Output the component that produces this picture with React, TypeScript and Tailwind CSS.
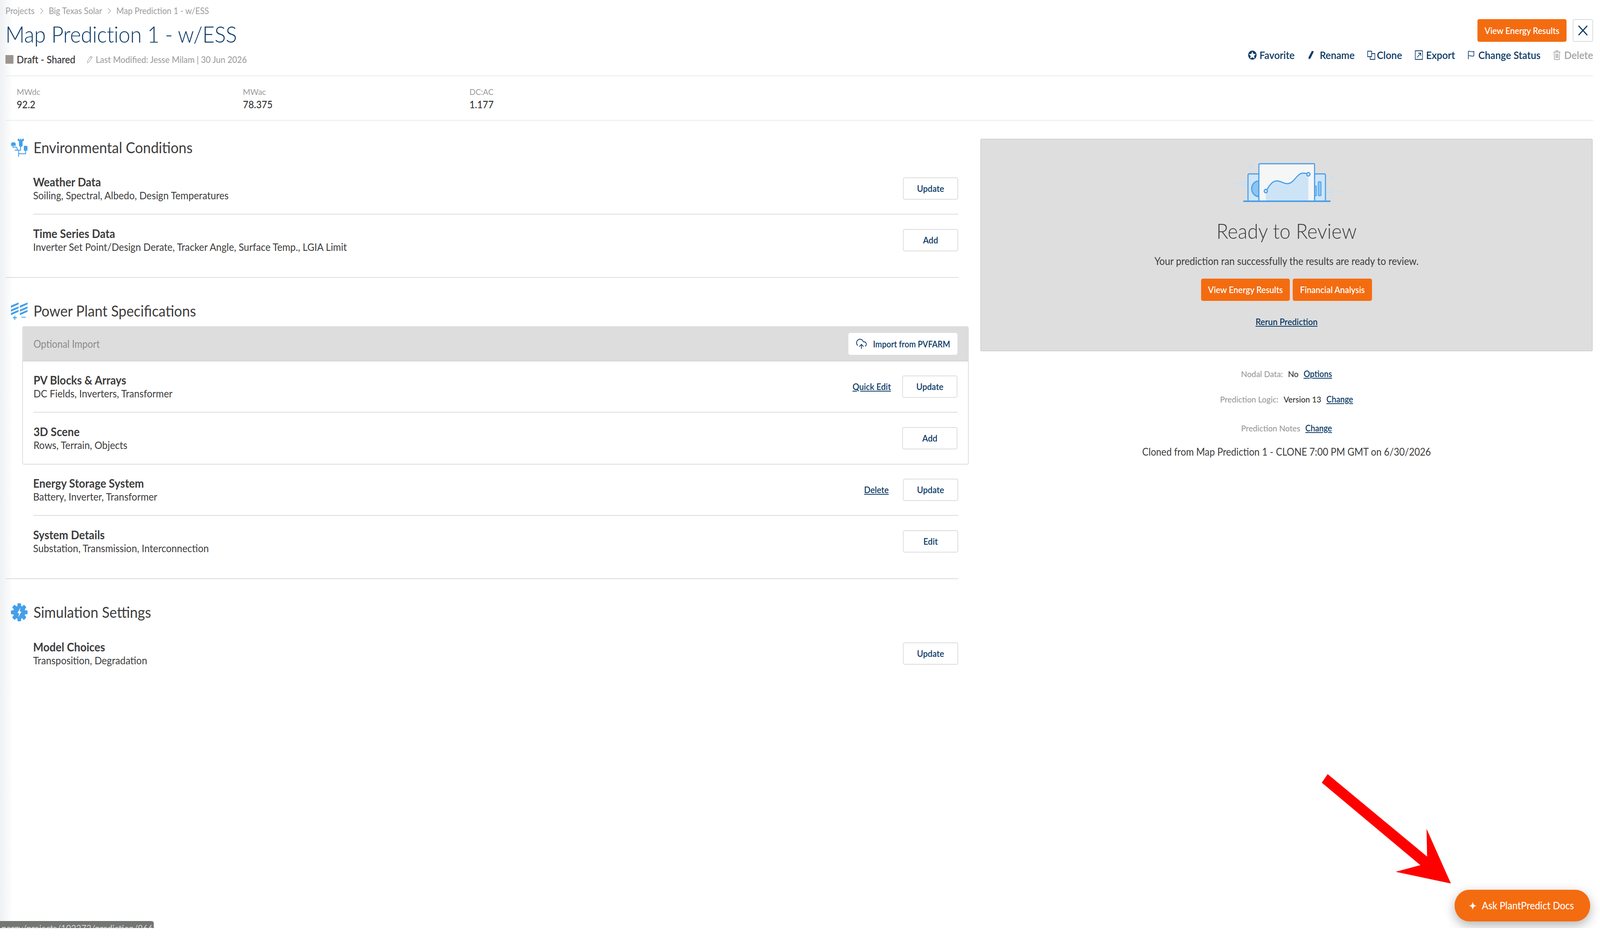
import type { FC, ReactNode } from 'react';
import { CloudUpload } from 'lucide-react';

// the page is laid out on the 4400px reference; the window can be narrower
const DESIGN_WIDTH = 4400;

const Caret: FC = () => (
  <svg viewBox="0 0 10 18" className="mx-[15px] h-[16px] w-[9px]" fill="none" stroke="#9c9c9c" strokeWidth="1.5">
    <path d="M1 1l8 8-8 8" />
  </svg>
);

const EnvIcon: FC = () => (
  <svg viewBox="30 30 135 138" className="h-[46px] w-[46px] shrink-0" fill="#459fe9">
    <path d="M85 30h13v8h7v-8h10v8h7v-8h13v18h-10v37l-12 8h-6l-12-8V48H85z" />
    <path d="M30 66l8-8h22l8 8v19H30z" />
    <path d="M135 85h30v37h-30z" />
    <g fill="none" stroke="#459fe9" strokeWidth="7">
      <path d="M108 85v33H60" />
      <path d="M45 85v10h22q13 0 13 12v11" />
      <path d="M92 118v50" />
      <path d="M150 122v23H92" />
    </g>
  </svg>
);

const PowerIcon: FC = () => (
  <svg viewBox="30 35 135 135" className="h-[46px] w-[46px] shrink-0" fill="#459fe9">
    <path d="M30 62l62-24v14l-62 26zM30 92l62-24v14l-62 26zM30 118l62-24v14l-62 26z" />
    <path d="M102 62l63-24v14l-63 26zM102 92l63-24v14l-63 26zM102 118l63-24v14l-63 26z" />
    <path d="M58 137h7v12h13v7H65v13h-7v-13H45v-7h13zM114 146h36v6h-36z" />
  </svg>
);

const GearIcon: FC = () => (
  <svg viewBox="0 0 46 46" className="h-[46px] w-[46px] shrink-0">
    <g fill="#459fe9">
      <circle cx="23" cy="23" r="17" />
      <rect x="18" y="0" width="10" height="46" rx="2" />
      <rect x="18" y="0" width="10" height="46" rx="2" transform="rotate(45 23 23)" />
      <rect x="18" y="0" width="10" height="46" rx="2" transform="rotate(90 23 23)" />
      <rect x="18" y="0" width="10" height="46" rx="2" transform="rotate(135 23 23)" />
    </g>
    <path d="M26 11l-8 14h5l-3 11 9-15h-5z" fill="#ffffff" />
  </svg>
);

const StarCircle: FC = () => (
  <svg viewBox="0 0 24 24" className="h-[24px] w-[24px]">
    <circle cx="12" cy="12" r="11.5" fill="#0b3a66" />
    <path d="M12 2.5l2.9 6.3 6.8.8-5 4.6 1.4 6.8-6.100-3.400-6.100 3.400 1.400-6.800-5-4.600 6.800-.8z" fill="#ffffff" />
  </svg>
);

const PencilSolid: FC = () => (
  <svg viewBox="0 0 20 24" className="h-[24px] w-[20px]" fill="#0b3a66">
    <path d="M13 1l5 2-9 17-5 3-.5-5.500z" />
  </svg>
);

const CloneIcon: FC = () => (
  <svg viewBox="0 0 22 24" className="h-[24px] w-[22px]" fill="none" stroke="#0b3a66" strokeWidth="1.800">
    <path d="M1 2h11v14H1z" />
    <path d="M12 8h9v15H8v-7" />
  </svg>
);

const ExportIcon: FC = () => (
  <svg viewBox="0 0 22 24" className="h-[24px] w-[22px]" fill="none" stroke="#0b3a66" strokeWidth="1.800">
    <path d="M1 1h20v22H1z" />
    <path d="M6 18l9-10M9 7h7v7" />
  </svg>
);

const FlagIcon: FC = () => (
  <svg viewBox="0 0 20 24" className="h-[24px] w-[19px]" fill="none" stroke="#0b3a66" strokeWidth="1.800">
    <path d="M2 23V2c5-2 10 3 16 0v12c-5 3-11-2-16 0" />
  </svg>
);

const TrashIcon: FC = () => (
  <svg viewBox="0 0 22 26" className="h-[26px] w-[21px]" fill="none" stroke="#a3a3a3" strokeWidth="1.800">
    <path d="M1 5h20M8 5V1h6v4M3 5l1 20h14l1-20M8 9v12M11 9v12M14 9v12" />
  </svg>
);

const PencilOutline: FC = () => (
  <svg viewBox="0 0 20 24" className="h-[20px] w-[18px]" fill="none" stroke="#a3a3a3" strokeWidth="1.500">
    <path d="M13 2l5 3-11 15-5 3 .5-6zM11 5l5 3" />
  </svg>
);

const ReviewArt: FC = () => (
  <svg viewBox="0 0 299 100" className="h-[100px] w-[299px]">
    <g fill="none" stroke="#c6dff5" strokeWidth="3">
      <circle cx="51" cy="10" r="4" />
      <path d="M271 32l8 8M279 32l-8 8" />
      <path d="M0 50h10M15 50h27M23 57h19M258 75h21M285 74h14M258 69h6M268 69h8" />
    </g>
    <rect x="43" y="28" width="30" height="70" rx="3" fill="#cfe5f8" stroke="#4a9fe8" strokeWidth="3" />
    <rect x="226" y="28" width="30" height="70" rx="3" fill="#cfe5f8" stroke="#4a9fe8" strokeWidth="3" />
    <path d="M73 46a20 20 0 0 0 0 40z" fill="#8cc3f2" stroke="#4a9fe8" strokeWidth="3" />
    <rect x="226" y="59" width="5" height="25" fill="#8cc3f2" stroke="#4a9fe8" strokeWidth="2" />
    <rect x="236" y="48" width="8" height="36" rx="2" fill="#8cc3f2" stroke="#4a9fe8" strokeWidth="2" />
    <rect x="73" y="2" width="153" height="96" rx="2" fill="#f6f6f6" stroke="#4a9fe8" strokeWidth="3" />
    <path d="M92 72C103 58 108 46 123 46c12 0 18 8 30 7 18-2 24-27 42-27 6 0 10 1 14 3v68H92z" fill="#cde4f7" />
    <path d="M92 72C103 58 108 46 123 46c12 0 18 8 30 7 18-2 24-27 42-27 6 0 10 1 14 3" fill="none" stroke="#4a9fe8" strokeWidth="3" />
    <circle cx="92" cy="72" r="4.500" fill="#cde4f7" stroke="#4a9fe8" strokeWidth="3" />
    <circle cx="209" cy="29" r="4.500" fill="#cde4f7" stroke="#4a9fe8" strokeWidth="3" />
    <rect x="30" y="96" width="240" height="4" rx="1" fill="#4a9fe8" />
  </svg>
);

const OutlineButton: FC<{ label: string }> = ({ label }) => (
  <button className="h-[57px] w-[152px] rounded-[5px] border-2 border-[#dcdcdc] bg-white text-[23px] font-semibold text-[#0b3a66]">
    {label}
  </button>
);

const OrangeButton: FC<{ label: string; width: string; height: string }> = ({ label, width, height }) => (
  <button className={`${width} ${height} rounded-[5px] bg-[#f46c10] text-[23px] font-semibold text-white`}>
    {label}
  </button>
);

const Row: FC<{ title: string; desc: string; action: string; link?: string; linkGap?: string; divider?: boolean }> = ({
  title,
  desc,
  action,
  link,
  linkGap,
  divider,
}) => (
  <div className={`flex h-[131px] items-center justify-between ${divider ? 'border-b-2 border-[#dcdcdc]' : ''}`}>
    <div>
      <div className="text-[30px] leading-[35px] font-bold text-[#3d3d3d]">{title}</div>
      <div className="text-[26.6px] leading-[35px] text-[#3d3d3d]">{desc}</div>
    </div>
    <div className="flex items-center">
      {link && <a className={`${linkGap} text-[23px] font-semibold text-[#0b3a66] underline`}>{link}</a>}
      <OutlineButton label={action} />
    </div>
  </div>
);

const Heading: FC<{ icon: ReactNode; title: string }> = ({ icon, title }) => (
  <div className="flex h-[60px] items-center gap-[16px] pl-[15px]">
    {icon}
    <h2 className="text-[38.6px] font-normal text-[#3d3d3d]">{title}</h2>
  </div>
);

const InfoLine: FC<{ children: ReactNode; height: string }> = ({ children, height }) => (
  <div className={`flex ${height} items-center justify-center gap-[14px] text-[22px] font-medium`}>{children}</div>
);

const InfoLabel: FC<{ text: string }> = ({ text }) => <span className="text-[#9a9a9a]">{text}</span>;

const InfoLink: FC<{ text: string }> = ({ text }) => (
  <a className="font-semibold text-[#0b3a66] underline">{text}</a>
);

const ActionItem: FC<{ icon: ReactNode; label: string; gap: string; muted?: boolean }> = ({ icon, label, gap, muted }) => (
  <span className={`flex items-center ${gap} ${muted ? 'text-[#a3a3a3]' : 'text-[#0b3a66]'}`}>
    {icon}
    {label}
  </span>
);

export default function App() {
  const fit = Math.min(window.innerWidth / DESIGN_WIDTH, 1);

  return (
    <div className="h-screen w-screen overflow-hidden bg-white">
      <div
        className="relative h-[2403px] w-[4400px] origin-top-left bg-white [font-family:Lato,'Liberation_Sans',sans-serif]"
        style={{ transform: `scaleX(${fit})` }}
      >
        <div className="relative h-[2375px] overflow-hidden bg-gradient-to-r from-[#eef0f2] from-0% to-white to-[0.8%]">
          <div className="w-[4381px] pl-[15px]">
            <header className="flex h-[195px] justify-between border-b-2 border-[#e8ecec]">
              <div>
                <div className="flex h-[56px] items-center text-[22.6px] text-[#9c9c9c]">
                  Projects
                  <Caret />
                  Big Texas Solar
                  <Caret />
                  Map Prediction 1 - w/ESS
                </div>
                <h1 className="flex h-[60px] items-center text-[58px] font-light tracking-[-0.3px] text-[#0b3a66]">
                  Map Prediction 1 - w/ESS
                </h1>
                <div className="flex h-[72px] items-center">
                  <span className="h-[22px] w-[22px] bg-[#9a9590]" />
                  <span className="ml-[9px] text-[26px] font-medium text-[#333333]">Draft - Shared</span>
                  <span className="ml-[31px] flex items-center gap-[7px] text-[23px] font-medium text-[#a0a0a0]">
                    <PencilOutline />
                    Last Modified: Jesse Milam | 30 Jun 2026
                  </span>
                </div>
              </div>
              <div className="flex flex-col items-end pt-[49px]">
                <div className="flex gap-[17px]">
                  <OrangeButton label="View Energy Results" width="w-[245px]" height="h-[58px]" />
                  <button className="flex h-[58px] w-[56px] items-center justify-center rounded-[5px] border-2 border-[#d5dce4] bg-white">
                    <svg viewBox="0 0 26 26" className="h-[26px] w-[26px]" fill="none" stroke="#0b3a66" strokeWidth="3">
                      <path d="M1 1l24 24M25 1L1 25" />
                    </svg>
                  </button>
                </div>
                <div className="mt-[12px] flex h-[44px] items-center gap-[35px] text-[27px] font-semibold">
                  <ActionItem icon={<StarCircle />} label="Favorite" gap="gap-[8px]" />
                  <ActionItem icon={<PencilSolid />} label="Rename" gap="gap-[14px]" />
                  <ActionItem icon={<CloneIcon />} label="Clone" gap="gap-[4px]" />
                  <ActionItem icon={<ExportIcon />} label="Export" gap="gap-[9px]" />
                  <ActionItem icon={<FlagIcon />} label="Change Status" gap="gap-[10px]" />
                  <ActionItem icon={<TrashIcon />} label="Delete" gap="gap-[9px]" muted />
                </div>
              </div>
            </header>

            <section className="grid h-[114px] grid-cols-[622px_623px_622px] content-center border-b-2 border-[#e8ecec] pl-[31px]">
              {[
                ['MWdc', '92.2'],
                ['MWac', '78.375'],
                ['DC:AC', '1.177'],
              ].map(([label, value]) => (
                <div key={label}>
                  <div className="text-[22px] leading-[33px] text-[#9a9a9a]">{label}</div>
                  <div className="text-[26px] leading-[33px] font-medium text-[#333333]">{value}</div>
                </div>
              ))}
            </section>

            <div className="flex gap-[32px]">
              <main className="w-[2649px] shrink-0 pt-[16px]">
                <section className="mr-[29px] border-b-2 border-[#dcdcdc] pt-[23px] pb-[29px]">
                  <Heading icon={<EnvIcon />} title="Environmental Conditions" />
                  <div className="mt-[10px] ml-[76px]">
                    <Row title="Weather Data" desc="Soiling, Spectral, Albedo, Design Temperatures" action="Update" divider />
                    <Row title="Time Series Data" desc="Inverter Set Point/Design Derate, Tracker Angle, Surface Temp., LGIA Limit" action="Add" />
                  </div>
                </section>

                <section className="pt-[55px]">
                  <Heading icon={<PowerIcon />} title="Power Plant Specifications" />
                  <div className="mt-[9px] ml-[46px] overflow-hidden rounded-[5px] border-2 border-[#dcdcdc]">
                    <div className="flex h-[88px] items-center justify-between border-b-2 border-[#d5d5d5] bg-[#dddddd] pr-[29px] pl-[29px]">
                      <span className="text-[26px] text-[#8a8a8a]">Optional Import</span>
                      <button className="flex h-[56px] w-[300px] items-center gap-[16px] rounded-[5px] bg-white pl-[20px] text-[22px] font-semibold text-[#0b3a66]">
                        <CloudUpload size={32} strokeWidth={1.5} color="#0b3a66" />
                        Import from PVFARM
                      </button>
                    </div>
                    <div className="px-[29px]">
                      <Row title="PV Blocks & Arrays" desc="DC Fields, Inverters, Transformer" action="Update" link="Quick Edit" linkGap="mr-[31px]" divider />
                      <Row title="3D Scene" desc="Rows, Terrain, Objects" action="Add" />
                    </div>
                  </div>
                  <div className="mr-[29px] ml-[76px]">
                    <Row title="Energy Storage System" desc="Battery, Inverter, Transformer" action="Update" link="Delete" linkGap="mr-[39px]" divider />
                    <Row title="System Details" desc="Substation, Transmission, Interconnection" action="Edit" />
                  </div>
                  <div className="mt-[29px] mr-[29px] border-b-2 border-[#dcdcdc]" />
                </section>

                <section className="pt-[55px]">
                  <Heading icon={<GearIcon />} title="Simulation Settings" />
                  <div className="mt-[10px] mr-[29px] ml-[76px]">
                    <Row title="Model Choices" desc="Transposition, Degradation" action="Update" />
                  </div>
                </section>
              </main>

              <aside className="w-[1684px] pt-[46px]">
                <div className="flex h-[544px] flex-col items-center rounded-[4px] border-2 border-[#d2d2d2] bg-[#dedede] pt-[60px]">
                  <ReviewArt />
                  <h3 className="mt-[44px] text-[54px] leading-[60px] font-light text-[#3d3d3d]">Ready to Review</h3>
                  <p className="mt-[29px] text-[26.4px] leading-[36px] text-[#3d3d3d]">
                    Your prediction ran successfully the results are ready to review.
                  </p>
                  <div className="mt-[27px] flex gap-[8px]">
                    <OrangeButton label="View Energy Results" width="w-[244px]" height="h-[57px]" />
                    <OrangeButton label="Financial Analysis" width="w-[218px]" height="h-[57px]" />
                  </div>
                  <a className="mt-[36px] text-[23px] font-semibold text-[#0b3a66] underline">Rerun Prediction</a>
                </div>
                <InfoLine height="mt-[41px] h-[32px]">
                  <InfoLabel text="Nodal Data:" />
                  <span className="text-[#333333]">No</span>
                  <InfoLink text="Options" />
                </InfoLine>
                <InfoLine height="mt-[33px] h-[32px]">
                  <InfoLabel text="Prediction Logic:" />
                  <span className="text-[#333333]">Version 13</span>
                  <InfoLink text="Change" />
                </InfoLine>
                <InfoLine height="mt-[42px] h-[32px]">
                  <InfoLabel text="Prediction Notes" />
                  <InfoLink text="Change" />
                </InfoLine>
                <div className="mt-[27px] text-center text-[26px] leading-[36px] text-[#3d3d3d]">
                  Cloned from Map Prediction 1 - CLONE 7:00 PM GMT on 6/30/2026
                </div>
              </aside>
            </div>
          </div>

          <svg viewBox="3635 1981 355 280" className="absolute top-[1981px] left-[3635px] h-[280px] w-[355px]">
            <path d="M3651 1981L3635 2003 3906 2214 3838 2231 3990 2261 3923 2121 3924.500 2192z" fill="#ff0000" />
          </svg>

          <button className="absolute top-[2277px] left-[4000px] flex h-[81px] w-[373px] items-center gap-[14px] rounded-full bg-[#f46c10] pl-[39px] text-[26px] font-medium text-white shadow-[0_10px_30px_rgba(0,0,0,0.3)]">
            <svg viewBox="0 0 22 22" className="h-[22px] w-[22px]" fill="#ffffff">
              <path d="M11 0c1 7 3 9.500 11 11-8 1.500-10 4-11 11-1-7-3-9.500-11-11 8-1.500 10-4 11-11z" />
            </svg>
            Ask PlantPredict Docs
          </button>

          <div className="absolute top-[2357px] left-0 h-[24px] w-[423px] overflow-hidden rounded-tr-[6px] bg-[#747674] pt-[6px] pl-[4px] text-[24px] leading-[24px] whitespace-nowrap text-[#d8d8d8]">
            nergy/projects/102272/prediction/966727/
          </div>
        </div>
      </div>
    </div>
  );
}
